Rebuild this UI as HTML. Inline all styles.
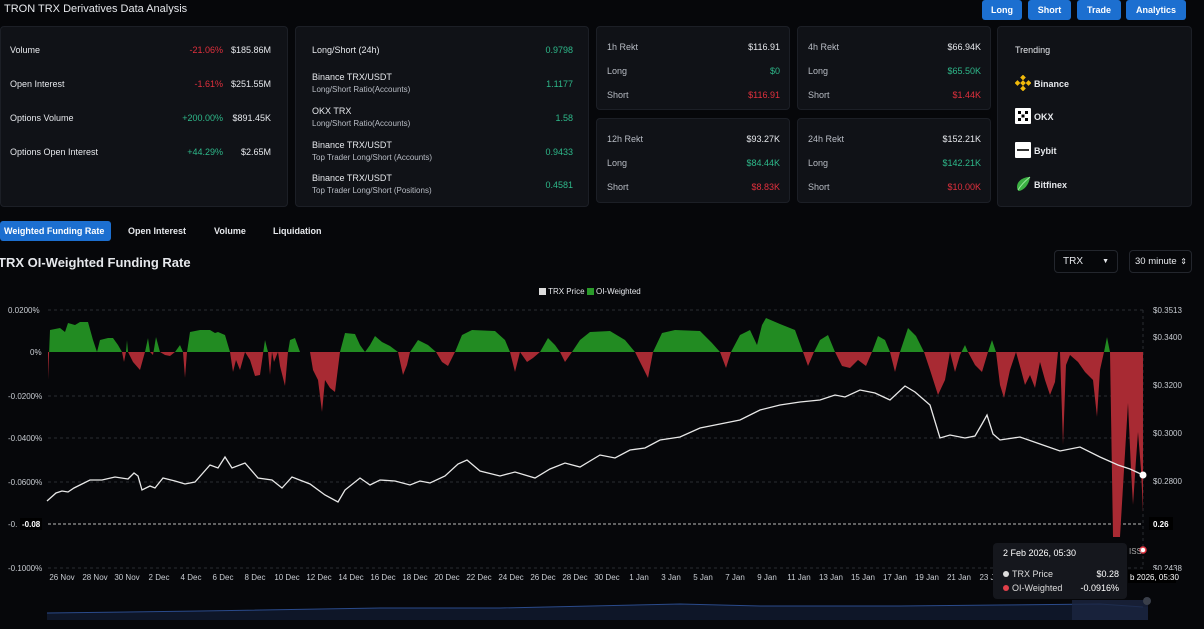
<!DOCTYPE html>
<html><head><meta charset="utf-8"><style>
*{margin:0;padding:0;box-sizing:border-box}
body{width:1204px;height:629px;background:#06070a;color:#e6e8ec;font-family:"Liberation Sans",sans-serif;font-size:9px;position:relative;overflow:hidden}
.a{position:absolute;white-space:nowrap}
.card{position:absolute;background:#101217;border:1px solid #1c1f26;border-radius:4px}
.g{color:#2eb88a}.r{color:#e0303d}.m{color:#b8bcc4}
.btn{position:absolute;top:0;height:20px;background:#1c6fd0;color:#fff;font-weight:bold;font-size:9px;line-height:20px;text-align:center;border-radius:3px}
.rt{text-align:right}
.sel{position:absolute;border:1px solid #23262d;border-radius:4px;height:23px;top:250px;font-size:10px;line-height:21px;padding-left:8px;white-space:nowrap}
</style></head><body>
<div class="a" style="left:4px;top:3px;font-size:11px">TRON TRX Derivatives Data Analysis</div>
<div class="btn" style="left:982px;width:40px">Long</div>
<div class="btn" style="left:1028px;width:43px">Short</div>
<div class="btn" style="left:1077px;width:44px">Trade</div>
<div class="btn" style="left:1126px;width:60px">Analytics</div>

<div class="card" style="left:0;top:26px;width:288px;height:181px"></div>
<div class="a" style="left:10px;top:45px">Volume</div><div class="a r rt" style="right:981px;top:45px">-21.06%</div><div class="a rt" style="right:933px;top:45px">$185.86M</div>
<div class="a" style="left:10px;top:79px">Open Interest</div><div class="a r rt" style="right:981px;top:79px">-1.61%</div><div class="a rt" style="right:933px;top:79px">$251.55M</div>
<div class="a" style="left:10px;top:113px">Options Volume</div><div class="a g rt" style="right:981px;top:113px">+200.00%</div><div class="a rt" style="right:933px;top:113px">$891.45K</div>
<div class="a" style="left:10px;top:147px">Options Open Interest</div><div class="a g rt" style="right:981px;top:147px">+44.29%</div><div class="a rt" style="right:933px;top:147px">$2.65M</div>

<div class="card" style="left:295px;top:26px;width:294px;height:181px"></div>
<div class="a" style="left:312px;top:45px">Long/Short (24h)</div><div class="a g" style="right:631px;top:45px">0.9798</div>
<div class="a" style="left:312px;top:72px">Binance TRX/USDT</div><div class="a m" style="left:312px;top:85px;font-size:8px">Long/Short Ratio(Accounts)</div><div class="a g" style="right:631px;top:79px">1.1177</div>
<div class="a" style="left:312px;top:106px">OKX TRX</div><div class="a m" style="left:312px;top:119px;font-size:8px">Long/Short Ratio(Accounts)</div><div class="a g" style="right:631px;top:113px">1.58</div>
<div class="a" style="left:312px;top:140px">Binance TRX/USDT</div><div class="a m" style="left:312px;top:153px;font-size:8px">Top Trader Long/Short (Accounts)</div><div class="a g" style="right:631px;top:147px">0.9433</div>
<div class="a" style="left:312px;top:173px">Binance TRX/USDT</div><div class="a m" style="left:312px;top:186px;font-size:8px">Top Trader Long/Short (Positions)</div><div class="a g" style="right:631px;top:180px">0.4581</div>

<div class="card" style="left:596px;top:26px;width:194px;height:84px"></div>
<div class="a m" style="left:607px;top:42px">1h Rekt</div><div class="a" style="right:424px;top:42px">$116.91</div>
<div class="a m" style="left:607px;top:66px">Long</div><div class="a g" style="right:424px;top:66px">$0</div>
<div class="a m" style="left:607px;top:90px">Short</div><div class="a r" style="right:424px;top:90px">$116.91</div>
<div class="card" style="left:797px;top:26px;width:194px;height:84px"></div>
<div class="a m" style="left:808px;top:42px">4h Rekt</div><div class="a" style="right:223px;top:42px">$66.94K</div>
<div class="a m" style="left:808px;top:66px">Long</div><div class="a g" style="right:223px;top:66px">$65.50K</div>
<div class="a m" style="left:808px;top:90px">Short</div><div class="a r" style="right:223px;top:90px">$1.44K</div>
<div class="card" style="left:596px;top:118px;width:194px;height:85px"></div>
<div class="a m" style="left:607px;top:134px">12h Rekt</div><div class="a" style="right:424px;top:134px">$93.27K</div>
<div class="a m" style="left:607px;top:158px">Long</div><div class="a g" style="right:424px;top:158px">$84.44K</div>
<div class="a m" style="left:607px;top:182px">Short</div><div class="a r" style="right:424px;top:182px">$8.83K</div>
<div class="card" style="left:797px;top:118px;width:194px;height:85px"></div>
<div class="a m" style="left:808px;top:134px">24h Rekt</div><div class="a" style="right:223px;top:134px">$152.21K</div>
<div class="a m" style="left:808px;top:158px">Long</div><div class="a g" style="right:223px;top:158px">$142.21K</div>
<div class="a m" style="left:808px;top:182px">Short</div><div class="a r" style="right:223px;top:182px">$10.00K</div>

<div class="card" style="left:997px;top:26px;width:195px;height:181px"></div>
<div class="a" style="left:1015px;top:45px">Trending</div>
<svg class="a" style="left:1015px;top:75px" width="16" height="16" viewBox="0 0 16 16"><g fill="#f0b90b"><rect x="6" y="0.5" width="4" height="4" transform="rotate(45 8 2.5)"/><rect x="6" y="6" width="4" height="4" transform="rotate(45 8 8)"/><rect x="6" y="11.5" width="4" height="4" transform="rotate(45 8 13.5)"/><rect x="0.5" y="6" width="4" height="4" transform="rotate(45 2.5 8)"/><rect x="11.5" y="6" width="4" height="4" transform="rotate(45 13.5 8)"/></g></svg>
<div class="a" style="left:1034px;top:79px;font-weight:bold">Binance</div>
<svg class="a" style="left:1015px;top:108px" width="16" height="16"><rect width="16" height="16" fill="#fff" rx="1"/><g fill="#000"><rect x="3" y="3" width="3" height="3"/><rect x="10" y="3" width="3" height="3"/><rect x="6.5" y="6.5" width="3" height="3"/><rect x="3" y="10" width="3" height="3"/><rect x="10" y="10" width="3" height="3"/></g></svg>
<div class="a" style="left:1034px;top:112px;font-weight:bold">OKX</div>
<svg class="a" style="left:1015px;top:142px" width="16" height="16"><rect width="16" height="16" fill="#fff" rx="1"/><rect x="2" y="7" width="12" height="2" fill="#333"/></svg>
<div class="a" style="left:1034px;top:146px;font-weight:bold">Bybit</div>
<svg class="a" style="left:1015px;top:176px" width="16" height="16"><path d="M15 1C8 1 2 5 2 11c0 2 1 4 2 4 5-1 10-6 11-14z" fill="#3cb043"/><path d="M3 14C6 9 10 5 15 1" stroke="#9be89e" stroke-width="1" fill="none"/></svg>
<div class="a" style="left:1034px;top:180px;font-weight:bold">Bitfinex</div>

<div class="a" style="left:0;top:221px;width:111px;height:20px;background:#1c6fd0;border-radius:3px;color:#fff;font-weight:bold;line-height:20px;padding-left:4px">Weighted Funding Rate</div>
<div class="a" style="left:128px;top:226px;font-weight:bold">Open Interest</div>
<div class="a" style="left:214px;top:226px;font-weight:bold">Volume</div>
<div class="a" style="left:273px;top:226px;font-weight:bold">Liquidation</div>
<div class="a" style="left:-2px;top:255px;font-size:13px;font-weight:bold">TRX OI-Weighted Funding Rate</div>
<div class="sel" style="left:1054px;width:64px">TRX<span style="position:absolute;right:8px;top:0;font-size:7px">▼</span></div>
<div class="sel" style="left:1129px;width:63px;padding-left:5px;font-size:9.5px">30 minute<span style="position:absolute;right:4px;top:0;font-size:8px">⇕</span></div>

<div class="a" style="left:539px;top:287px;font-size:8px"><span style="display:inline-block;width:7px;height:7px;background:#ddd;vertical-align:-1px"></span> TRX Price <span style="display:inline-block;width:7px;height:7px;background:#2a9a2a;vertical-align:-1px"></span> OI-Weighted</div>

<svg class="a" style="left:0;top:0" width="1204" height="629">
<defs>
<clipPath id="up"><rect x="0" y="0" width="1204" height="352"/></clipPath>
<clipPath id="dn"><rect x="0" y="352" width="1204" height="300"/></clipPath>
</defs>
<g stroke="#2a2d33" stroke-dasharray="3,3" stroke-width="1">
<line x1="48" y1="310" x2="1143" y2="310"/><line x1="48" y1="396" x2="1143" y2="396"/><line x1="48" y1="438" x2="1143" y2="438"/><line x1="48" y1="482" x2="1143" y2="482"/><line x1="48" y1="568" x2="1143" y2="568"/>
<line x1="1143" y1="310" x2="1143" y2="568"/>
</g>
<line x1="48" y1="524" x2="1143" y2="524" stroke="#bbb" stroke-dasharray="3,2"/>
<g font-size="8" fill="#c8ccd2" font-family="Liberation Sans">
<text x="8" y="313">0.0200%</text><text x="30" y="355">0%</text><text x="8" y="399">-0.0200%</text><text x="8" y="441">-0.0400%</text><text x="8" y="485">-0.0600%</text><text x="8" y="571">-0.1000%</text><text x="8" y="527">-0.</text>
<text x="1153" y="313">$0.3513</text><text x="1153" y="340">$0.3400</text><text x="1153" y="388">$0.3200</text><text x="1153" y="436">$0.3000</text><text x="1153" y="484">$0.2800</text><text x="1153" y="571">$0.2438</text>
</g>
<rect x="20" y="518" width="22" height="12" fill="#000"/><text x="22" y="527" font-size="8" fill="#fff" font-weight="bold">-0.08</text>
<rect x="1149" y="517" width="24" height="13" fill="#000"/><text x="1153" y="527" font-size="8" fill="#fff" font-weight="bold">0.26</text>
<path id="f" d="M48 352 L48 380 L50 330 L60 328 L65 332 L68 323 L75 325 L80 322 L88 322 L93 340 L97 352 L100 340 L108 338 L113 338 L118 345 L122 352 L124 362 L126 352 L127 340 L128 352 L133 362 L140 370 L145 352 L148 338 L150 352 L153 355 L156 337 L160 352 L165 355 L170 356 L175 352 L180 345 L183 352 L185 378 L187 352 L190 332 L200 330 L210 330 L215 333 L218 332 L225 335 L230 352 L233 372 L236 360 L240 370 L245 352 L250 360 L255 376 L260 375 L265 340 L268 352 L270 375 L272 352 L274 362 L278 352 L280 366 L285 386 L288 352 L290 340 L295 338 L300 352 L310 352 L313 370 L318 380 L322 412 L325 380 L330 388 L335 392 L340 352 L345 333 L355 334 L360 345 L365 352 L370 345 L375 336 L382 342 L390 346 L398 352 L403 375 L407 365 L410 352 L418 340 L428 345 L436 352 L442 362 L448 366 L455 352 L462 335 L472 330 L495 331 L505 340 L510 352 L515 372 L520 352 L527 362 L533 358 L540 352 L548 338 L555 345 L560 352 L565 362 L572 352 L580 340 L590 332 L610 331 L625 340 L635 352 L642 366 L648 378 L653 352 L662 333 L675 330 L700 331 L712 343 L720 352 L726 368 L731 352 L740 335 L750 330 L757 345 L762 325 L766 318 L780 324 L795 330 L803 352 L808 366 L814 352 L820 340 L828 335 L835 352 L842 366 L850 368 L858 360 L866 366 L872 352 L878 336 L885 340 L890 352 L895 372 L900 352 L908 328 L916 336 L924 352 L930 370 L938 395 L945 380 L950 352 L955 372 L960 355 L965 345 L968 352 L975 365 L982 372 L988 352 L992 340 L996 352 L1000 385 L1004 398 L1010 370 L1016 352 L1021 370 L1025 385 L1030 375 L1035 388 L1040 362 L1045 380 L1050 395 L1055 382 L1058 352 L1060 352 L1063 445 L1066 365 L1070 355 L1078 362 L1085 372 L1093 380 L1097 417 L1100 370 L1104 352 L1107 337 L1110 352 L1113 537 L1120 537 L1124 470 L1128 403 L1131 470 L1133 505 L1136 460 L1138 432 L1141 470 L1143 512 L1143 352 Z"/>
<use href="#f" fill="#228b22" clip-path="url(#up)"/>
<use href="#f" fill="#a82a33" clip-path="url(#dn)"/>
<path d="M47 501 L56 493 L62 491 L68 492 L74 488 L80 485 L90 480 L102 480 L115 477 L128 479 L134 473 L138 476 L142 490 L150 486 L155 488 L163 478 L175 481 L185 484 L195 482 L210 465 L218 468 L225 457 L232 468 L245 463 L258 478 L272 480 L282 488 L292 477 L310 484 L325 495 L338 502 L345 490 L360 478 L370 485 L380 480 L395 481 L410 485 L420 481 L430 483 L445 476 L458 464 L467 460 L480 471 L500 476 L515 472 L535 478 L550 469 L565 463 L580 467 L600 455 L615 458 L630 450 L645 448 L660 440 L680 437 L700 428 L715 425 L740 420 L760 410 L780 405 L800 402 L820 400 L835 395 L845 397 L860 390 L875 393 L890 400 L905 386 L915 392 L930 405 L940 438 L950 435 L965 438 L975 436 L982 424 L987 415 L993 434 L1000 440 L1020 437 L1040 444 L1060 451 L1080 447 L1100 457 L1118 465 L1130 469 L1143 475" fill="none" stroke="#e8e8e8" stroke-width="1.3"/>
<circle cx="1143" cy="475" r="3.5" fill="#fff"/>
<circle cx="1143" cy="550" r="3" fill="#fff" stroke="#e0303d" stroke-width="1.5"/>
<text x="1129" y="554" font-size="8" fill="#aaa">ISS</text>
<g font-size="8" fill="#c8ccd2" font-family="Liberation Sans" text-anchor="middle">
<text x="62" y="580">26 Nov</text><text x="95" y="580">28 Nov</text><text x="127" y="580">30 Nov</text><text x="159" y="580">2 Dec</text><text x="191" y="580">4 Dec</text><text x="223" y="580">6 Dec</text><text x="255" y="580">8 Dec</text><text x="287" y="580">10 Dec</text><text x="319" y="580">12 Dec</text><text x="351" y="580">14 Dec</text><text x="383" y="580">16 Dec</text><text x="415" y="580">18 Dec</text><text x="447" y="580">20 Dec</text><text x="479" y="580">22 Dec</text><text x="511" y="580">24 Dec</text><text x="543" y="580">26 Dec</text><text x="575" y="580">28 Dec</text><text x="607" y="580">30 Dec</text><text x="639" y="580">1 Jan</text><text x="671" y="580">3 Jan</text><text x="703" y="580">5 Jan</text><text x="735" y="580">7 Jan</text><text x="767" y="580">9 Jan</text><text x="799" y="580">11 Jan</text><text x="831" y="580">13 Jan</text><text x="863" y="580">15 Jan</text><text x="895" y="580">17 Jan</text><text x="927" y="580">19 Jan</text><text x="959" y="580">21 Jan</text><text x="987" y="580">23 J</text>
</g>
<path d="M47 613 L200 611 L380 608 L500 608 L680 604 L760 606 L900 606 L1000 605 L1100 604 L1143 607 L1148 607 L1148 620 L47 620 Z" fill="#0e1628"/>
<path d="M47 613 L200 611 L380 608 L500 608 L680 604 L760 606 L900 606 L1000 605 L1100 604 L1143 607" fill="none" stroke="#2a4a8a"/>
<rect x="1072" y="600" width="76" height="20" fill="#1b2640" opacity="0.8"/>
<circle cx="1147" cy="601" r="4" fill="#3a3f4a"/>
<rect x="1128" y="570" width="48" height="13" fill="#000"/><text x="1130" y="580" font-size="8" fill="#fff">b 2026, 05:30</text>
<rect x="993" y="543" width="134" height="56" rx="4" fill="#15171d"/>
<text x="1003" y="556" font-size="9" fill="#fff">2 Feb 2026, 05:30</text>
<circle cx="1006" cy="574" r="3" fill="#ddd"/><text x="1012" y="577" font-size="9" fill="#ddd">TRX Price</text><text x="1119" y="577" font-size="9" fill="#fff" text-anchor="end">$0.28</text>
<circle cx="1006" cy="588" r="3" fill="#e0404a"/><text x="1012" y="591" font-size="9" fill="#ddd">OI-Weighted</text><text x="1119" y="591" font-size="9" fill="#fff" text-anchor="end">-0.0916%</text>
</svg>
</body></html>
